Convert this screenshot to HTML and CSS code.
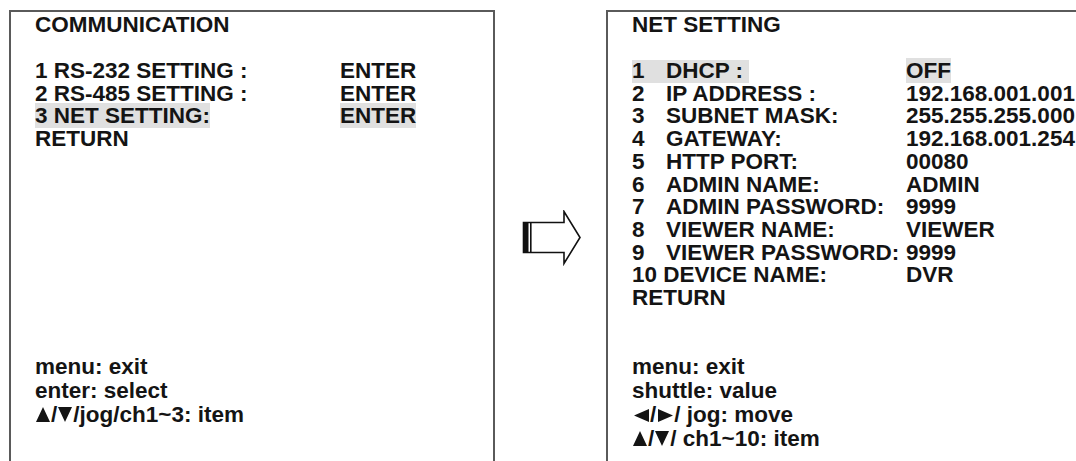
FILE: index.html
```html
<!DOCTYPE html>
<html>
<head>
<meta charset="utf-8">
<link rel="stylesheet" href="styles.css">
</head>
<body>
<div class="page">
  <section class="panel panel-left">
    <div class="menu">
      <div class="title">COMMUNICATION</div>
      <div class="blank"></div>
      <div class="rows rows-left">
        <span>1 RS-232 SETTING :</span><span>ENTER</span>
        <span>2 RS-485 SETTING :</span><span>ENTER</span>
        <span><span class="hl">3 NET SETTING:</span></span><span><span class="hl">ENTER</span></span>
        <span>RETURN</span><span></span>
      </div>
    </div>
    <div class="hints">
      <div>menu: exit</div>
      <div>enter: select</div>
      <div><svg class="tri" width="14" height="15" viewBox="0 0 14 15" aria-label="▲"><path d="M7 0 L14 15 H0 Z"/></svg>/<svg class="tri" width="14" height="15" viewBox="0 0 14 15" aria-label="▼"><path d="M0 0 H14 L7 15 Z"/></svg>/jog/ch1~3: item</div>
    </div>
  </section>

  <div class="arrow-col">
    <svg class="arrow" width="60" height="56" viewBox="0 0 60 56">
      <path d="M1.5 12.5 H42 V1.5 L58 27.5 L42 53.5 V42.5 H1.5 Z" fill="#fff" stroke="#111" stroke-width="1.6" stroke-linejoin="miter"/>
      <rect x="1.5" y="12.5" width="5" height="30" fill="#111"/>
      <rect x="8" y="12.5" width="1.6" height="30" fill="#111"/>
    </svg>
  </div>

  <section class="panel panel-right">
    <div class="menu">
      <div class="title">NET SETTING</div>
      <div class="blank"></div>
      <div class="rows rows-right">
        <span class="hl">1</span><span class="hl cell-start">DHCP :&nbsp;</span><span><span class="hl">OFF</span></span>
        <span>2</span><span>IP ADDRESS :</span><span>192.168.001.001</span>
        <span>3</span><span>SUBNET MASK:</span><span>255.255.255.000</span>
        <span>4</span><span>GATEWAY:</span><span>192.168.001.254</span>
        <span>5</span><span>HTTP PORT:</span><span>00080</span>
        <span>6</span><span>ADMIN NAME:</span><span>ADMIN</span>
        <span>7</span><span>ADMIN PASSWORD:</span><span>9999</span>
        <span>8</span><span>VIEWER NAME:</span><span>VIEWER</span>
        <span>9</span><span>VIEWER PASSWORD:</span><span>9999</span>
        <span class="span2">10 DEVICE NAME:</span><span>DVR</span>
        <span class="span3">RETURN</span>
      </div>
    </div>
    <div class="hints">
      <div>menu: exit</div>
      <div>shuttle: value</div>
      <div><svg class="tri tri-h" width="15" height="13" viewBox="0 0 15 13" aria-label="◀"><path d="M0 6.5 L15 0 V13 Z"/></svg>/<svg class="tri tri-h" width="15" height="13" viewBox="0 0 15 13" aria-label="▶"><path d="M0 0 L15 6.5 L0 13 Z"/></svg>/ jog: move</div>
      <div><svg class="tri" width="14" height="15" viewBox="0 0 14 15" aria-label="▲"><path d="M7 0 L14 15 H0 Z"/></svg>/<svg class="tri" width="14" height="15" viewBox="0 0 14 15" aria-label="▼"><path d="M0 0 H14 L7 15 Z"/></svg>/ ch1~10: item</div>
    </div>
  </section>
</div>
</body>
</html>
```

FILE: styles.css
```css
html, body {
  margin: 0;
  padding: 0;
  background: #fff;
  overflow: hidden;
}

body {
  font-family: "Liberation Sans", Arial, sans-serif;
  font-weight: bold;
  font-size: 22.5px;
  color: #141414;
}

.page {
  display: flex;
  align-items: flex-start;
  width: 1076px;
  height: 461px;
}

.panel {
  box-sizing: border-box;
  margin-top: 10px;
  height: 470px;
  border-top: 2px solid #5a5a5a;
  border-left: 2px solid #5a5a5a;
  border-right: 2px solid #5a5a5a;
  padding: 2px 0 0 24px;
  flex-shrink: 0;
}

.panel-left {
  margin-left: 9px;
  width: 486px;
}

.panel-right {
  width: 480px;
}

.menu {
  height: 341px;
  line-height: 22.7px;
}

.blank {
  height: 23.3px;
}

.title,
.rows {
  white-space: nowrap;
}

.rows {
  display: grid;
}

.rows-left {
  grid-template-columns: 305px auto;
}

.rows-right {
  grid-template-columns: 34px 240px auto;
}

.cell-start {
  justify-self: start;
}

.span2 {
  grid-column: span 2;
}

.span3 {
  grid-column: span 3;
}

.hl {
  background: #e0e0e0;
}

.hints {
  line-height: 24px;
  white-space: nowrap;
}

.tri {
  display: inline-block;
  vertical-align: baseline;
  fill: #141414;
  margin: 0 1px 0 1px;
}

.tri-h {
  margin: 0 1px 0 2px;
}

.arrow-col {
  width: 111px;
  flex-shrink: 0;
  display: flex;
  justify-content: center;
  padding-top: 210px;
}

.arrow {
  display: block;
  margin-left: 2px;
}
```
